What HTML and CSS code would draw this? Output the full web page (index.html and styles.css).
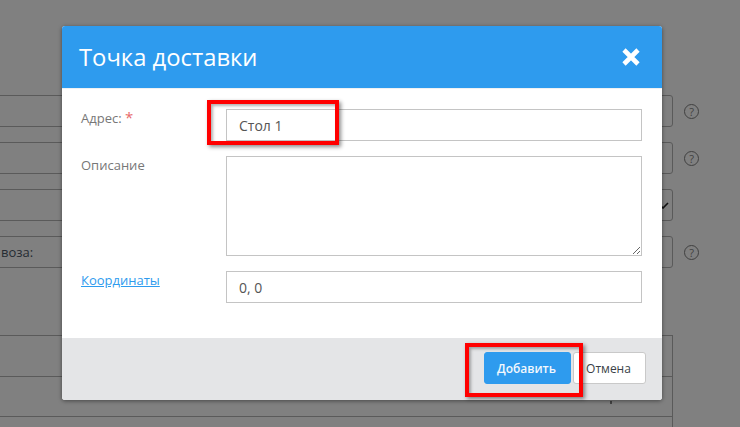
FILE: index.html
```html
<!DOCTYPE html>
<html lang="ru">
<head>
<meta charset="utf-8">
<title>Точка доставки</title>
<link rel="stylesheet" href="styles.css">
</head>
<body>
<div class="page">
  <div class="backdrop">
    <div class="bg-row"><span class="bg-field"></span><span class="help">?</span></div>
    <div class="bg-row"><span class="bg-field"></span><span class="help">?</span></div>
    <div class="bg-row"><span class="bg-field bg-select">
      <svg class="bg-check" width="9" height="7" viewBox="0 0 9 7"><path d="M1 4l2 2 5-5" fill="none" stroke="#111" stroke-width="1.6"/></svg>
    </span></div>
    <div class="bg-row"><span class="bg-field bg-text">воза:</span><span class="help">?</span></div>
    <div class="bg-table">
      <div class="bg-cell"></div>
      <div class="bg-cell bg-cell-short"><span class="bg-caret"></span></div>
      <div class="bg-cell"></div>
    </div>
  </div>

  <section class="modal">
    <header class="modal-head">
      <h1 class="modal-title">Точка доставки</h1>
      <svg class="close" width="20" height="20" viewBox="0 0 20 20"><path d="M3 3l14 14M17 3L3 17" fill="none" stroke="#fff" stroke-width="4.6"/></svg>
    </header>
    <div class="modal-body">
      <label class="label">Адрес: <span class="req">*</span></label>
      <input class="control" type="text" value="Стол 1">
      <label class="label">Описание</label>
      <textarea class="control area"></textarea>
      <a class="label link" href="#">Координаты</a>
      <input class="control" type="text" value="0, 0">
    </div>
    <footer class="modal-foot">
      <button class="btn btn-primary" type="button">Добавить</button>
      <button class="btn btn-plain" type="button">Отмена</button>
    </footer>
  </section>

  <div class="mark mark-address"></div>
  <div class="mark mark-add"></div>
</div>
</body>
</html>
```
FILE: styles.css
```css
* { box-sizing: border-box; }
html, body { margin: 0; padding: 0; }
body {
  width: 740px;
  height: 427px;
  overflow: hidden;
  font-family: "Open Sans", "Liberation Sans", sans-serif;
  background: #808080;
}
.page {
  position: relative;
  width: 740px;
  height: 427px;
  overflow: hidden;
}

/* dimmed form behind the dialog */
.backdrop {
  display: flex;
  flex-direction: column;
  gap: 15px;
  padding-top: 95px;
  margin-left: -10px;
}
.bg-row {
  display: flex;
  align-items: center;
  gap: 11px;
  height: 32px;
}
.bg-field {
  display: flex;
  align-items: center;
  width: 683px;
  height: 32px;
  border: 1px solid #5a5a5a;
  border-radius: 3px;
}
.bg-select { justify-content: flex-end; padding-right: 3px; }
.bg-text {
  padding-left: 10px;
  font-size: 13px;
  color: #262c33;
}
.help {
  display: flex;
  align-items: center;
  justify-content: center;
  width: 15px;
  height: 15px;
  border: 1.5px solid #404040;
  border-radius: 50%;
  font-size: 11px;
  line-height: 1;
  color: #404040;
}
.bg-table {
  display: flex;
  flex-direction: column;
  width: 683px;
  margin-top: 52px;
  border-top: 1px solid #5a5a5a;
  border-right: 1px solid #5a5a5a;
}
.bg-cell {
  height: 41px;
  border-bottom: 1px solid #5a5a5a;
}
.bg-cell-short { height: 40px; padding: 24px 0 0 620px; }
.bg-caret {
  display: block;
  width: 2px;
  height: 3px;
  background: #444;
}

/* dialog */
.modal {
  position: absolute;
  left: 62px;
  top: 26px;
  display: flex;
  flex-direction: column;
  width: 600px;
  height: 374px;
  border-radius: 3px;
  overflow: hidden;
  background: #fff;
  box-shadow: 0 1px 4px rgba(0, 0, 0, .45);
}
.modal-head {
  display: flex;
  align-items: center;
  justify-content: space-between;
  flex: none;
  height: 63px;
  padding: 0 21px 0 17px;
  background: #2e9bee;
  border-bottom: 1px solid #eef1f3;
}
.modal-title {
  margin: 0;
  font-size: 23.8px;
  font-weight: 400;
  color: #fff;
}
.close { display: block; }
.modal-body {
  flex: 1;
  display: grid;
  grid-template-columns: 145px 1fr;
  grid-template-rows: 32px 100px 32px;
  row-gap: 15px;
  align-content: start;
  padding: 20px 20px 0 19px;
}
.label {
  font-size: 13px;
  line-height: 18px;
  color: #777;
}
.req { font-size: 15px; line-height: 15px; color: #e86a6a; }
.link {
  color: #2e9bee;
  text-decoration: underline;
}
.control {
  display: block;
  width: 100%;
  height: 100%;
  margin: 0;
  padding: 0 12px;
  border: 1px solid #c4c4c4;
  border-radius: 0;
  outline: 0;
  background: #fff;
  font-family: inherit;
  font-size: 14px;
  color: #555;
}
.area { resize: vertical; }
.modal-foot {
  display: flex;
  justify-content: flex-end;
  align-items: center;
  gap: 2px;
  flex: none;
  height: 62px;
  padding: 0 16px 2px 0;
  background: #e4e5e7;
}
.btn {
  height: 32px;
  margin: 0;
  padding: 0;
  border-radius: 3px;
  font-family: inherit;
  font-size: 12px;
}
.btn-primary {
  width: 87px;
  padding-right: 2px;
  border: 1px solid #2e9bee;
  background: #2e9bee;
  color: #f2f8fd;
  font-weight: 600;
}
.btn-plain {
  width: 73px;
  padding-right: 2px;
  border: 1px solid #c9c9c9;
  background: #fff;
  color: #3a3f47;
  font-weight: 500;
}

/* red annotation frames */
.mark {
  position: absolute;
  border: 4px solid #f00;
  box-shadow: 2px 2px 4px rgba(0, 0, 0, .45), inset 2px 2px 3px rgba(0, 0, 0, .3);
}
.mark-address { left: 207px; top: 100px; width: 132px; height: 45px; }
.mark-add { left: 465px; top: 343px; width: 118px; height: 54px; }
```
